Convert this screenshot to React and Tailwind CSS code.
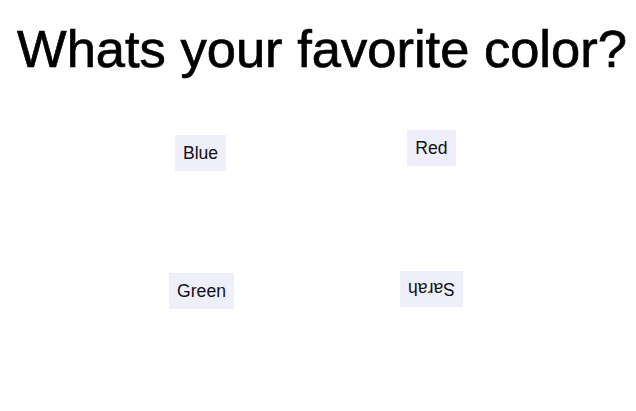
const choices = [
  { label: "Blue", cls: "justify-self-center self-start mt-[5px] ml-[-2px]" },
  { label: "Red", cls: "justify-self-center self-start" },
  { label: "Green", cls: "justify-self-center self-start mt-[2px]" },
  { label: "Sarah", cls: "justify-self-center self-start rotate-180" },
];

const App = () => {
  return (
    <div className="w-[636px] h-[411px] bg-white overflow-hidden">
      <h1
        className="text-center text-[52.5px] leading-none font-normal text-black pt-[23px] pl-[8px] whitespace-nowrap [-webkit-text-stroke:0.7px_black]"
        style={{ fontFamily: '"Liberation Sans", Arial, sans-serif' }}
      >
        Whats your favorite color?
      </h1>
      <div className="flex justify-center pr-[3px] mt-[54px]">
        <div className="grid grid-cols-[230px_230px] grid-rows-[141px_60px]">
          {choices.map((item, index) => {
            return (
              <button
                key={index}
                className={`px-[8px] py-[8px] bg-[#efeffb] text-[#111] text-[17.6px] leading-[20px] ${item.cls}`}
                style={{ fontFamily: '"Liberation Sans", Arial, sans-serif' }}
              >
                {item.label}
              </button>
            );
          })}
        </div>
      </div>
    </div>
  );
};

export default App;
